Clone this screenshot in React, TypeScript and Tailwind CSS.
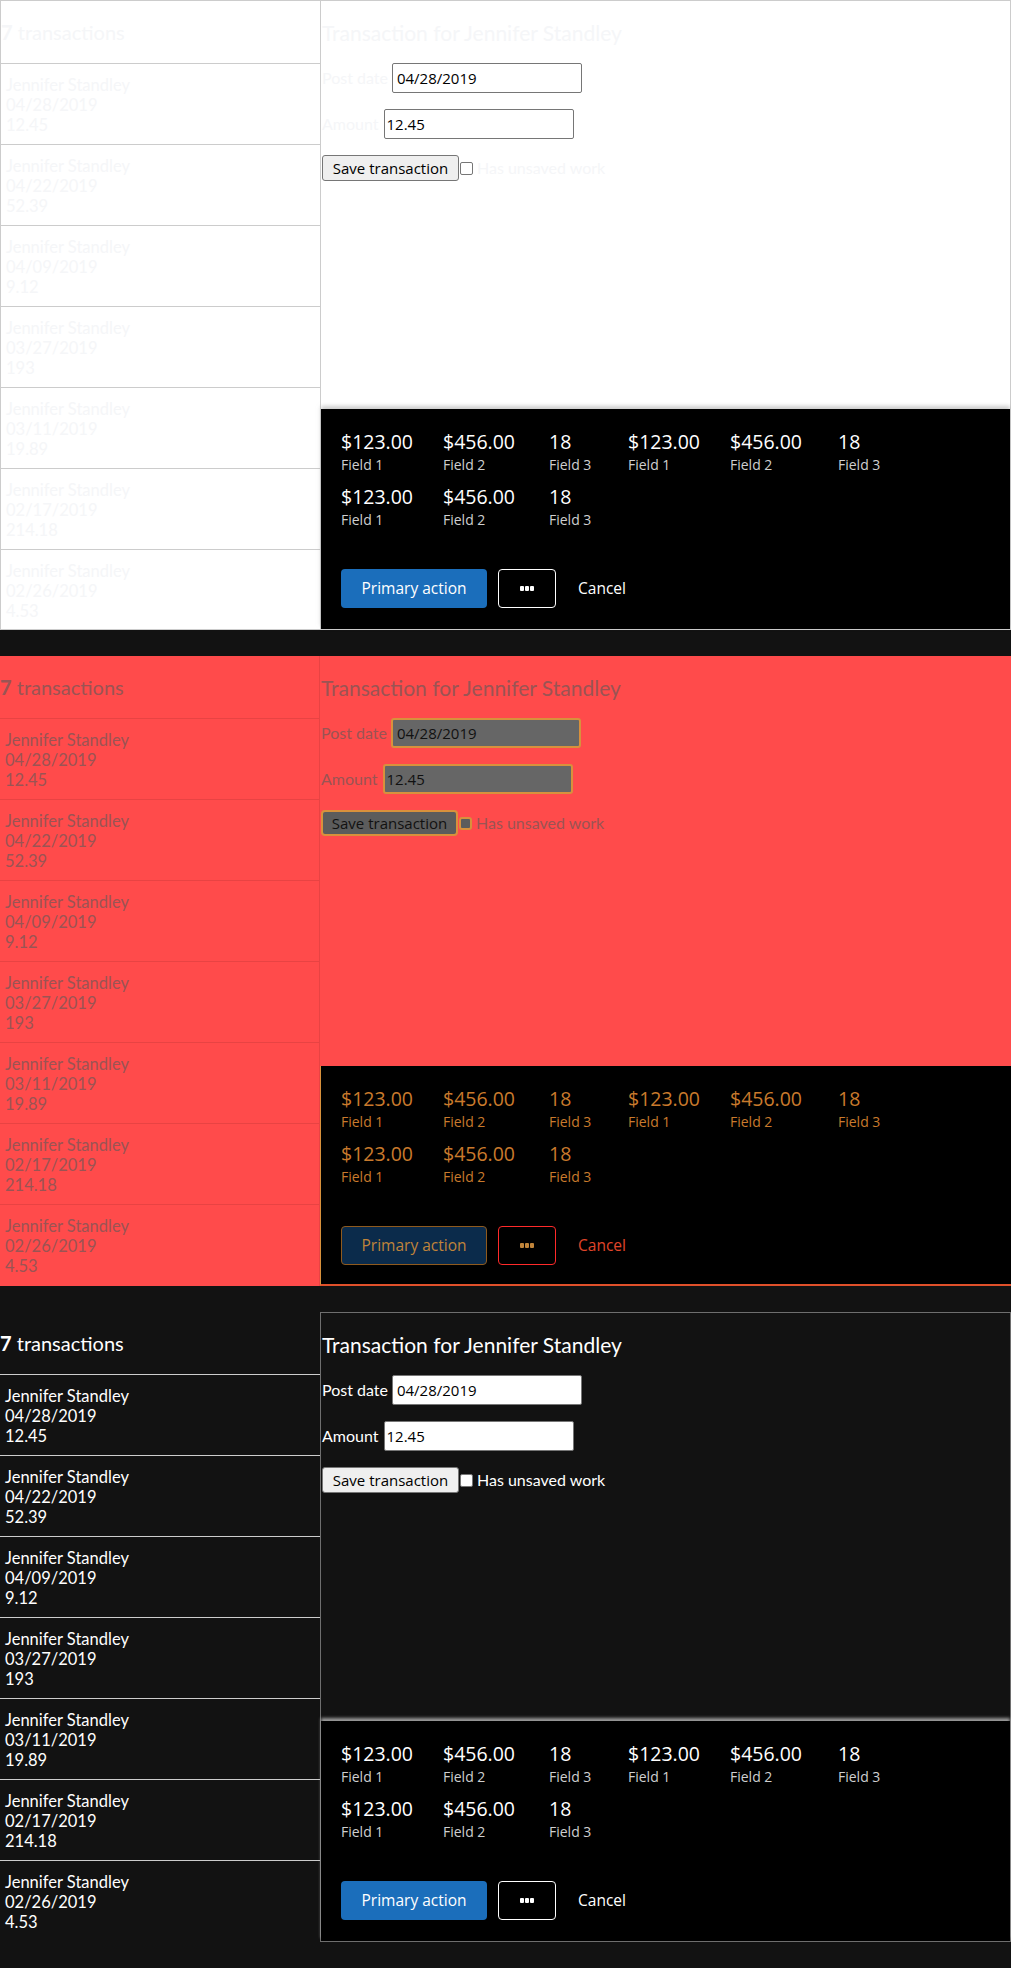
import React from "react";

type Variant = "light" | "diff" | "dark";

const txs: [string, string][] = [
  ["04/28/2019", "12.45"],
  ["04/22/2019", "52.39"],
  ["04/09/2019", "9.12"],
  ["03/27/2019", "193"],
  ["03/11/2019", "19.89"],
  ["02/17/2019", "214.18"],
  ["02/26/2019", "4.53"],
];

const stats: [string, string][] = [
  ["$123.00", "Field 1"],
  ["$456.00", "Field 2"],
  ["18", "Field 3"],
  ["$123.00", "Field 1"],
  ["$456.00", "Field 2"],
  ["18", "Field 3"],
  ["$123.00", "Field 1"],
  ["$456.00", "Field 2"],
  ["18", "Field 3"],
];

const T = {
  light: {
    root: "bg-white border border-[#cccccc]",
    left: "border-r border-[#cccccc]",
    sep: "border-b border-[#cccccc]",
    text: "text-[#f5f6f8]",
    right: "",
    input: "bg-white border border-[#767676] text-black rounded-[2px]",
    btn: "bg-[#efefef] border border-[#767676] text-black rounded-[3px]",
    check: "bg-white border border-[#767676] rounded-[2px]",
    footer: "bg-black shadow-[0_-3px_4px_rgba(170,170,170,0.6)]",
    val: "text-white",
    lab: "text-[#cfcfcf]",
    primary: "bg-[#1b6ebb] text-white",
    more: "border border-white text-white",
    cancel: "text-white",
  },
  diff: {
    root: "bg-[#ff4b4b]",
    left: "border-r border-[#e84343]",
    sep: "border-b border-[#e84343]",
    text: "text-[#9a5454]",
    right: "",
    input: "bg-[#666666] border-2 border-[#d8913c] text-[#111111] rounded-[3px]",
    btn: "bg-[#5c5c5c] border-2 border-[#d8913c] text-[#111111] rounded-[4px]",
    check: "bg-[#5c5c5c] border-2 border-[#d8913c] rounded-[3px]",
    footer: "bg-black border-l border-b-2 border-l-[#d8913c] border-b-[#e0502a]",
    val: "text-[#c97a2c]",
    lab: "text-[#c97a2c]",
    primary: "bg-[#0b2b4b] border border-[#8f5a1e] text-[#c0843a]",
    more: "border border-[#ff2a2a] text-[#c0843a]",
    cancel: "text-[#e0452a]",
  },
  dark: {
    root: "bg-[#121212]",
    left: "",
    sep: "border-b border-[#cccccc]",
    text: "text-white",
    right: "border border-[#6e6e6e]",
    input: "bg-white border border-[#767676] text-black rounded-[2px]",
    btn: "bg-[#efefef] border border-[#767676] text-black rounded-[3px]",
    check: "bg-white border border-[#767676] rounded-[2px]",
    footer: "bg-black shadow-[0_-3px_3px_rgba(200,200,200,0.75)]",
    val: "text-white",
    lab: "text-[#cfcfcf]",
    primary: "bg-[#1b6ebb] text-white",
    more: "border border-white text-white",
    cancel: "text-white",
  },
};

function Panel({ v }: { v: Variant }) {
  const t = T[v];
  return (
    <div className={`flex h-[630px] mb-[26px] font-['Lato',sans-serif] ${t.root}`}>
      <div className={`w-[320px] shrink-0 flex flex-col ${t.left} ${t.text}`}>
        <div className={`h-[63px] shrink-0 flex items-center text-[20px] ${t.sep}`}>
          <span className="font-bold">7</span>
          <span>&nbsp;transactions</span>
        </div>
        {txs.map(([d, a], i) => (
          <div
            key={i}
            className={`h-[81px] shrink-0 pl-[5px] pt-[11px] text-[16.5px] leading-[20px] ${i < 6 ? t.sep : ""}`}
          >
            <div>Jennifer Standley</div>
            <div>{d}</div>
            <div>{a}</div>
          </div>
        ))}
      </div>
      <div className={`flex-1 flex flex-col ${t.right}`}>
        <div className="flex-1 pl-[1px] pt-[18px]">
          <div className={`text-[21px] leading-[28px] ${t.text}`}>Transaction for Jennifer Standley</div>
          <div className="flex items-center mt-[16px]">
            <span className={`text-[16px] ${t.text}`}>Post date</span>
            <div className={`ml-[4px] w-[190px] h-[30px] flex items-center px-[4px] text-[15px] font-['Open_Sans',sans-serif] ${t.input}`}>
              04/28/2019
            </div>
          </div>
          <div className="flex items-center mt-[16px]">
            <span className={`text-[16px] ${t.text}`}>Amount</span>
            <div className={`ml-[5px] w-[190px] h-[30px] flex items-center px-[2px] text-[15px] font-['Open_Sans',sans-serif] ${t.input}`}>
              12.45
            </div>
          </div>
          <div className="flex items-center mt-[16px]">
            <div className={`w-[137px] h-[26px] flex items-center justify-center text-[15px] font-['Open_Sans',sans-serif] ${t.btn}`}>
              Save transaction
            </div>
            <span className={`ml-[1px] w-[13px] h-[13px] ${t.check}`} />
            <span className={`ml-[4px] text-[16px] ${t.text}`}>Has unsaved work</span>
          </div>
        </div>
        <div className={`h-[220px] shrink-0 pt-[20px] pl-[20px] font-['Open_Sans',sans-serif] ${t.footer}`}>
          <div className="grid grid-cols-[102px_106px_79px_102px_108px_79px] gap-y-[9px]">
            {stats.map(([val, lab], i) => (
              <div key={i} className="flex flex-col">
                <span className={`text-[19.5px] leading-[26px] ${t.val}`}>{val}</span>
                <span className={`text-[14px] leading-[20px] ${t.lab}`}>{lab}</span>
              </div>
            ))}
          </div>
          <div className="flex items-center mt-[39px]">
            <div className={`w-[146px] h-[39px] rounded-[4px] flex items-center justify-center text-[15.5px] ${t.primary}`}>
              Primary action
            </div>
            <div className={`ml-[11px] w-[58px] h-[39px] rounded-[4px] flex items-center justify-center ${t.more}`}>
              <span className="flex gap-[1px]">
                <span className="w-[4px] h-[5px] rounded-[1px] bg-current" />
                <span className="w-[4px] h-[5px] rounded-[1px] bg-current" />
                <span className="w-[4px] h-[5px] rounded-[1px] bg-current" />
              </span>
            </div>
            <span className={`ml-[22px] text-[15.5px] ${t.cancel}`}>Cancel</span>
          </div>
        </div>
      </div>
    </div>
  );
}

export default function App() {
  return (
    <div className="w-[1011px] h-[1968px] bg-[#121212] overflow-hidden">
      <Panel v="light" />
      <Panel v="diff" />
      <Panel v="dark" />
    </div>
  );
}
